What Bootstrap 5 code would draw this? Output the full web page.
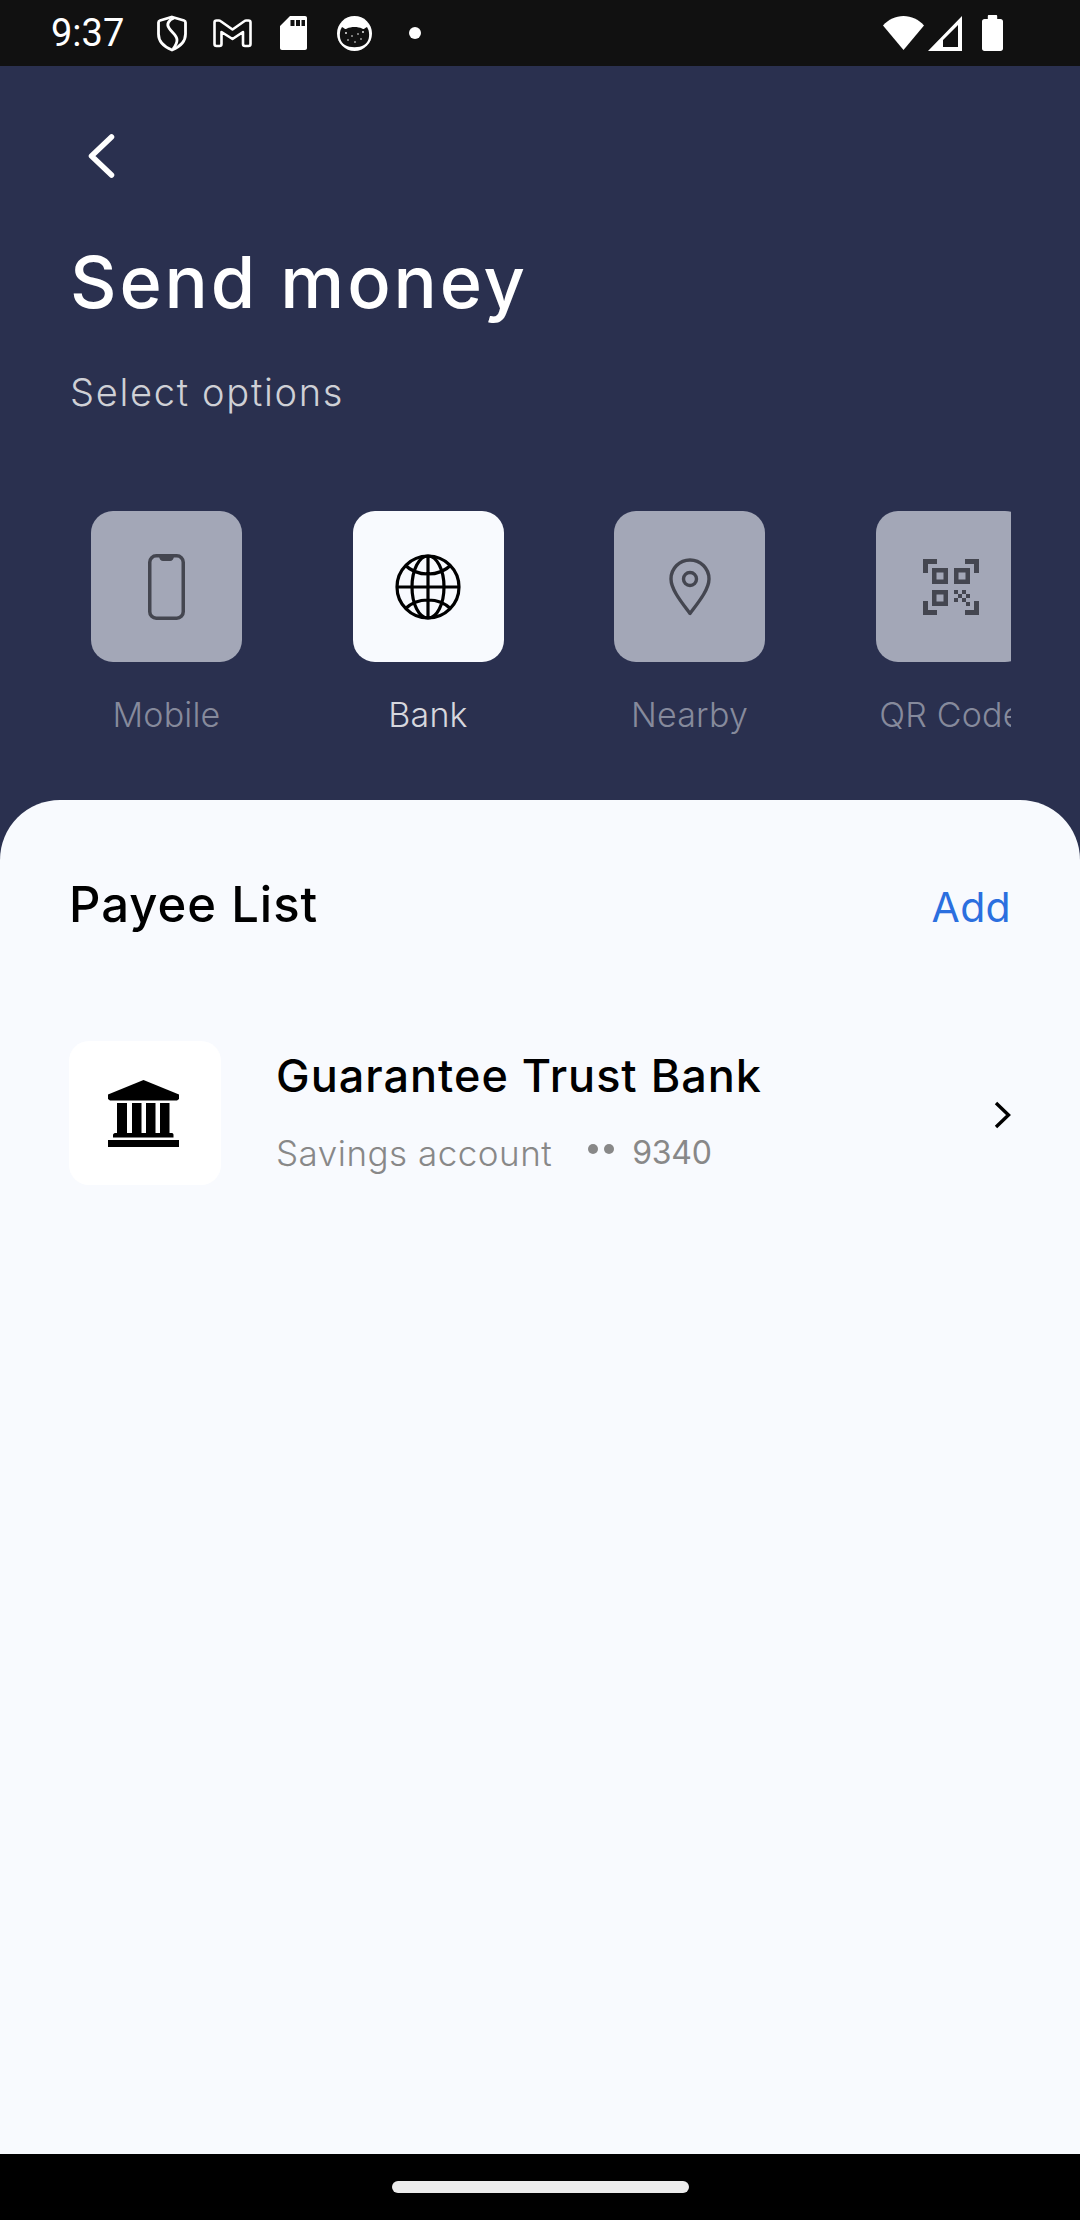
<!DOCTYPE html>
<html lang="en">
<head>
<meta charset="utf-8">
<title>Send money</title>
<link href="https://cdn.jsdelivr.net/npm/bootstrap@5.3.0/dist/css/bootstrap.min.css" rel="stylesheet">
<style>
html,body{margin:0;background:#000}
body{font-family:Inter,"Liberation Sans",sans-serif}
.phone{width:1080px;height:2220px;overflow:hidden}
.statusbar{height:66px;background:#111;color:#fff;padding:0 77px 0 51px}
.clock{font:400 38px/1 Roboto,sans-serif;width:73px;margin-right:33px;white-space:nowrap}
.ic-m{margin-left:26px}.ic-sd{margin-left:28px}.ic-cat{margin-left:30px}.ic-dot{margin-left:37px}
.ic-sig{margin-left:4px}.ic-bat{margin-left:20px}
.hero{height:734px;background:#2a304f;padding:0 69px 0 70px}
.back{padding-top:68px;padding-left:18px;height:134px}
.hero-title{font-size:72px;line-height:78px;font-weight:500;color:#fff;margin:0;letter-spacing:2.9px;padding-top:43px}
.hero-sub{font-size:38px;line-height:44px;font-weight:300;color:#cfd0d6;margin:49px 0 0;letter-spacing:1.7px}
.scroller{margin-top:97px;overflow:hidden;gap:110.5px;padding-left:21px}
.opt{flex:0 0 151px;width:151px}
.opt-tile{width:151px;height:151px;border-radius:22px;background:#a3a7b7}
.opt-on .opt-tile{background:#f8fafe}
.opt-lbl{display:block;width:193px;margin:30px 0 0 -21px;text-align:center;font-size:34px;line-height:46px;font-weight:300;color:#868a9c;white-space:nowrap;letter-spacing:.2px}
.opt-on .opt-lbl{color:#d6d7de}
.sheet{height:1354px;background:#f8fafe;border-radius:60px 60px 0 0;padding:0 69px}
.wrap-bg{background:#2a304f}
.sheet-head{padding-top:78px;height:241px}
.sheet-title{font-size:49px;line-height:54px;font-weight:500;color:#000;margin:0;letter-spacing:1px}
.add-lnk{font-size:41px;line-height:54px;color:#2b6fdf;text-decoration:none;font-weight:400;letter-spacing:.3px;padding-top:2px;display:block}
.bank-tile{width:152px;height:144px;border-radius:20px;background:#fff;margin-right:55px;flex:none}
.bank-glyph{margin-right:3px}
.bank-name{font-size:45px;line-height:50px;font-weight:500;color:#000;letter-spacing:1px;margin:0}
.bank-meta{font-size:35px;line-height:44px;font-weight:300;color:#888;margin:0;margin-top:30px;white-space:nowrap;letter-spacing:.5px}
.meta-dots{margin-left:36px;margin-right:18px;gap:6px;position:relative;top:-4px}
.meta-dot{width:10px;height:10px;border-radius:50%;background:#888;display:block}
.meta-num{font-weight:400;font-size:32px;letter-spacing:-.3px}
.go-chev{margin-top:4px;flex:none}
.bottombar{height:66px;background:#000}
.home-pill{width:297px;height:12px;border-radius:6px;background:#ececec}
</style>
</head>
<body>
<div class="phone">
  <div class="statusbar d-flex align-items-center">
    <span class="clock">9:37</span>
    <svg width="30" height="37" viewBox="0 0 30 37"><path d="M15 2 27 5.500c1 .3 1.500 1 1.500 2V19c0 8-6 13-13.500 16C7.500 32 1.500 27 1.500 19V7.500c0-1 .5-1.700 1.500-2Z" fill="none" stroke="#fff" stroke-width="2.800"/><path d="M17 3c-5 2-8 6-5 10 3 5 8 7 8 12 0 4-2.500 7-4 9" fill="none" stroke="#fff" stroke-width="2.800"/></svg>
    <svg class="ic-m" width="39" height="29" viewBox="0 0 39 29"><path d="M1.500 3.500c0-1.200.8-2 2-2H6c.6 0 1 .2 1.400.5L19.500 10.500 31.600 2c.4-.3.800-.5 1.400-.5h2.500c1.200 0 2 .8 2 2V25c0 1.200-.8 2-2 2h-3.500c-1.200 0-2-.8-2-2V13L19.500 20 8.500 13V25c0 1.200-.8 2-2 2H3.500c-1.200 0-2-.8-2-2Z" fill="none" stroke="#fff" stroke-width="2.600" stroke-linejoin="round"/></svg>
    <svg class="ic-sd" width="27" height="34" viewBox="0 0 27 34"><path fill-rule="evenodd" d="M10 0H25c1.200 0 2 .8 2 2V32c0 1.200-.8 2-2 2H2c-1.200 0-2-.8-2-2V10ZM10.500 4v6h4V4Zm5.500 0v6h4V4Zm5.500 0v6h3.500V4Z" fill="#fff"/></svg>
    <svg class="ic-cat" width="35" height="35" viewBox="0 0 35 35"><circle cx="17.500" cy="17.500" r="17.500" fill="#fff"/><path d="M3.500 14 5 11c3 1 2 3 5 1.500 4-2 11-2 15 0 3 1.500 2-.5 5-1.500l1.500 3C33 20 32 26 27 29c-5 3-14 3-19 0C3 26 2 20 3.500 14Z" fill="#111"/><g fill="#fff"><circle cx="9" cy="17" r=".9"/><circle cx="15" cy="20" r=".8"/><circle cx="21" cy="18" r=".8"/><circle cx="26" cy="16" r=".9"/><circle cx="11" cy="24" r=".8"/><circle cx="18" cy="26" r=".8"/><circle cx="24" cy="23" r=".8"/></g></svg>
    <svg class="ic-dot" width="12" height="12" viewBox="0 0 12 12"><circle cx="6" cy="6" r="6" fill="#fff"/></svg>
    <div class="ms-auto d-flex align-items-center">
      <svg width="41" height="34" viewBox="0 0 41 34"><path d="M20.500 34 0 9.500C5.500 3.500 12.500 0 20.500 0S35.500 3.500 41 9.500Z" fill="#fff"/></svg>
      <svg class="ic-sig" width="34" height="35" viewBox="0 0 34 35"><path fill-rule="evenodd" d="M34 0V35H0ZM30 9 15 24v7H30Z" fill="#fff"/></svg>
      <svg class="ic-bat" width="21" height="36" viewBox="0 0 21 36"><path d="M7 0h7c.8 0 1.200.4 1.200 1.200V4h3.300C20 4 21 5 21 6.500v27c0 1.500-1 2.500-2.500 2.500H2.500C1 36 0 35 0 33.500v-27C0 5 1 4 2.500 4h3.300V1.200C5.800.4 6.200 0 7 0Z" fill="#fff"/></svg>
    </div>
  </div>

  <div class="hero">
    <div class="back">
      <svg class="d-block" width="27" height="44" viewBox="0 0 27 44"><path d="M23.500 3 3.500 22 23.500 41" fill="none" stroke="#fff" stroke-width="5.500" stroke-linecap="round" stroke-linejoin="round"/></svg>
    </div>
    <h1 class="hero-title">Send money</h1>
    <p class="hero-sub">Select options</p>
    <div class="scroller d-flex">
      <div class="opt">
        <div class="opt-tile d-flex align-items-center justify-content-center">
          <svg width="37" height="66" viewBox="0 0 37 66"><rect x="1.750" y="1.750" width="33.500" height="62.500" rx="6.500" fill="none" stroke="#444650" stroke-width="3.500"/><path d="M11 2h15c0 3-2 5-4 5h-7c-2 0-4-2-4-5Z" fill="#444650"/></svg>
        </div>
        <span class="opt-lbl">Mobile</span>
      </div>
      <div class="opt opt-on">
        <div class="opt-tile d-flex align-items-center justify-content-center">
          <svg width="66" height="66" viewBox="0 0 66 66" fill="none" stroke="#000" stroke-width="3.200"><circle cx="33" cy="33" r="31"/><ellipse cx="33" cy="33" rx="16" ry="31"/><path d="M33 2V64M2 33H64M10 11c6 6 14 9 23 9s17-3 23-9M10 55c6-6 14-9 23-9s17 3 23 9"/></svg>
        </div>
        <span class="opt-lbl">Bank</span>
      </div>
      <div class="opt">
        <div class="opt-tile d-flex align-items-center justify-content-center">
          <svg width="42" height="58" viewBox="0 0 42 58" fill="none" stroke="#444650" stroke-width="3.400"><path d="M21 55.500C14 46 2 32 2 21a19 19 0 0 1 38 0C40 32 28 46 21 55.500Z" stroke-linejoin="round"/><circle cx="21" cy="21" r="6.500"/></svg>
        </div>
        <span class="opt-lbl">Nearby</span>
      </div>
      <div class="opt">
        <div class="opt-tile d-flex align-items-center justify-content-center">
          <svg width="56" height="56" viewBox="0 0 56 56" fill="#444650"><path d="M0 0H14V5H5V14H0ZM42 0H56V14H51V5H42ZM0 42H5V51H14V56H0ZM51 42H56V56H42V51H51Z"/><path fill-rule="evenodd" d="M9 9H25V25H9ZM13.500 13.500V20.500H20.500V13.500ZM31 9H47V25H31ZM35.500 13.500V20.500H42.500V13.500ZM9 31H25V47H9ZM13.500 35.500V42.500H20.500V35.500Z"/><path d="M31 31h4v4h-4ZM39 31h4v4h-4ZM35 35h4v4h-4ZM43 35h4v4h-4ZM31 39h4v4h-4ZM39 39h4v4h-4ZM43 43h4v4h-4Z"/></svg>
        </div>
        <span class="opt-lbl">QR Code</span>
      </div>
    </div>
  </div>

  <div class="wrap-bg">
    <div class="sheet">
      <div class="sheet-head d-flex justify-content-between align-items-start">
        <h2 class="sheet-title">Payee List</h2>
        <a class="add-lnk" href="#">Add</a>
      </div>
      <div class="d-flex align-items-center">
        <div class="bank-tile d-flex align-items-center justify-content-center">
          <svg class="bank-glyph" width="71" height="67" viewBox="0 0 71 67" fill="#000"><path d="M35.500 0 71 14.500V19l-2 1.500H2L0 19V14.500Z"/><path d="M9 23h10v30H9ZM24 23h9.500v30H24ZM38 23h9.500v30H38ZM52 23h9.500v30H52Z"/><path d="M7 53H64c1 0 1.500 1 1.500 2V57.500H5V55c0-1 1-2 2-2ZM0 60H71v7H0Z"/></svg>
        </div>
        <div class="flex-grow-1">
          <p class="bank-name">Guarantee Trust Bank</p>
          <div class="bank-meta d-flex align-items-center">
            <span>Savings account</span>
            <span class="meta-dots d-flex"><i class="meta-dot"></i><i class="meta-dot"></i></span>
            <span class="meta-num">9340</span>
          </div>
        </div>
        <svg class="go-chev" width="17" height="28" viewBox="0 0 17 28"><path d="M2 2 14.500 14 2 26" fill="none" stroke="#000" stroke-width="3.400"/></svg>
      </div>
    </div>
  </div>

  <div class="bottombar d-flex align-items-center justify-content-center">
    <div class="home-pill"></div>
  </div>
</div>
<script src="https://cdn.jsdelivr.net/npm/bootstrap@5.3.0/dist/js/bootstrap.bundle.min.js"></script>
</body>
</html>
